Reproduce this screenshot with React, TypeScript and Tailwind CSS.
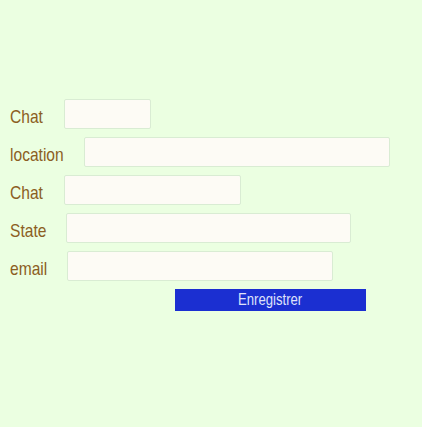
export default function App() {
  const rows = [
    { label: "Chat", name: "chat", labelW: "w-[54px]", inputW: "w-[87px]" },
    { label: "location", name: "location", labelW: "w-[74px]", inputW: "w-[306px]" },
    { label: "Chat", name: "chat2", labelW: "w-[54px]", inputW: "w-[177px]" },
    { label: "State", name: "state", labelW: "w-[56px]", inputW: "w-[285px]" },
    { label: "email", name: "email", labelW: "w-[57px]", inputW: "w-[266px]" },
  ];

  return (
    <div
      className="min-h-[427px] w-full bg-[#ebffe1] pt-[99px] pl-[10px]"
      style={{ fontFamily: '"Liberation Sans", Arial, sans-serif' }}
    >
      <form className="flex flex-col">
        {rows.map((r) => (
          <div key={r.name} className="flex items-center h-[30px] mb-[8px]">
            <label className={`${r.labelW} shrink-0 text-[19px] leading-none text-[#8b5e23] pt-[4px] whitespace-nowrap`}>
              <span className="inline-block scale-x-[0.82] origin-left">{r.label}</span>
            </label>
            <input
              type="text"
              name={r.name}
              className={`${r.inputW} h-[30px] bg-[#fdfbf5] border border-[#d9ecd3] rounded-[2px] outline-none`}
            />
          </div>
        ))}
        <button
          type="submit"
          className="ml-[165px] w-[191px] h-[22px] bg-[#1b2fd1] text-[#dfe2fa] text-[16px] leading-none"
        >
          <span className="inline-block scale-x-[0.82]">Enregistrer</span>
        </button>
      </form>
    </div>
  );
}
